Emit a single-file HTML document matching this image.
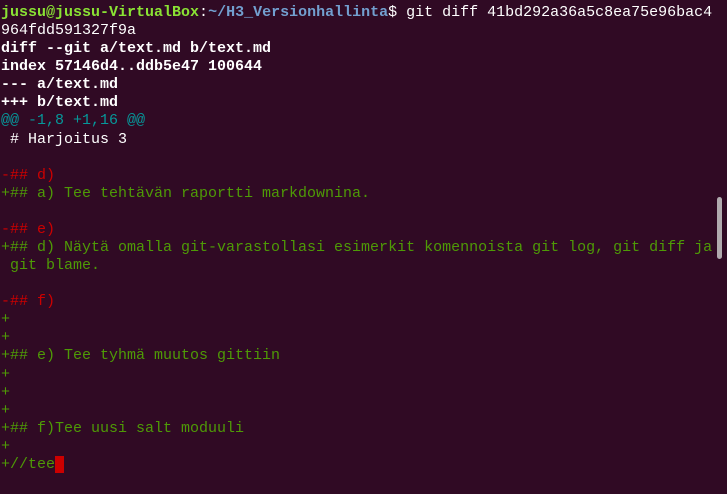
<!DOCTYPE html>
<html><head><meta charset="utf-8"><style>
html,body{margin:0;padding:0;background:#300a24;width:727px;height:494px;overflow:hidden}
pre{margin:0;padding:4px 0 0 1px;font-family:"Liberation Mono","DejaVu Sans Mono",monospace;font-size:15px;line-height:18.08px;color:#ffffff;white-space:pre}
.g{color:#8ae234;font-weight:bold}.b{color:#729fcf;font-weight:bold}
.w{font-weight:bold}.c{color:#06989a}.r{color:#cc0000}.n{color:#4e9a06}
.cur{background:#cc0000;color:#cc0000}
.sb{position:absolute;left:717px;top:197px;width:5px;height:62px;background:#b0aaae;border-radius:3px}
</style></head><body>
<pre><span class="g">jussu@jussu-VirtualBox</span>:<span class="b">~/H3_Versionhallinta</span>$ git diff 41bd292a36a5c8ea75e96bac4
964fdd591327f9a
<span class="w">diff --git a/text.md b/text.md</span>
<span class="w">index 57146d4..ddb5e47 100644</span>
<span class="w">--- a/text.md</span>
<span class="w">+++ b/text.md</span>
<span class="c">@@ -1,8 +1,16 @@</span>
 # Harjoitus 3

<span class="r">-## d)</span>
<span class="n">+## a) Tee tehtävän raportti markdownina.</span>

<span class="r">-## e)</span>
<span class="n">+## d) Näytä omalla git-varastollasi esimerkit komennoista git log, git diff ja</span>
<span class="n"> git blame.</span>

<span class="r">-## f)</span>
<span class="n">+</span>
<span class="n">+</span>
<span class="n">+## e) Tee tyhmä muutos gittiin</span>
<span class="n">+</span>
<span class="n">+</span>
<span class="n">+</span>
<span class="n">+## f)Tee uusi salt moduuli</span>
<span class="n">+</span>
<span class="n">+//tee</span><span class="cur"> </span></pre>
<div class="sb"></div>
</body></html>
